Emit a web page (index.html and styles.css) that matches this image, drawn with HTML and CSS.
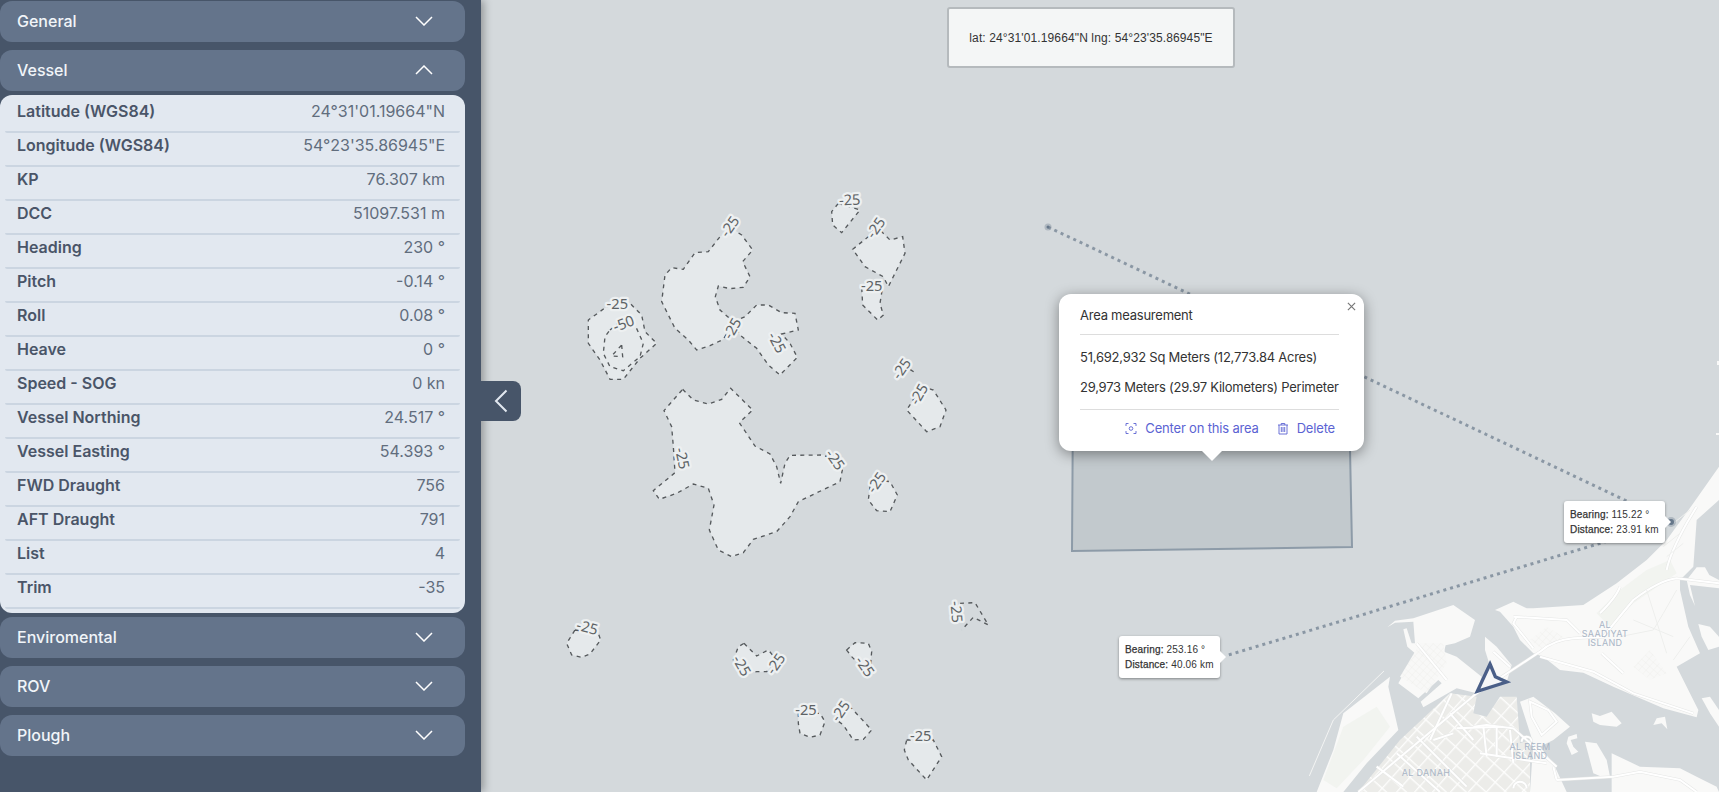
FILE: index.html
```html
<!DOCTYPE html>
<html lang="en">
<head>
    <meta charset="UTF-8">
    <meta name="viewport" content="width=device-width, initial-scale=1.0">
    <title>Vessel tracking</title>
    <link rel="stylesheet" href="styles.css">
</head>
<body>
    <div class="page">
        <aside class="sidebar">
            <div class="bar">
                <span>General</span>
                <svg class="chevron" viewBox="0 0 18 10"><path d="M1 1l8 8 8-8"/></svg>
            </div>
            <div class="bar">
                <span>Vessel</span>
                <svg class="chevron" viewBox="0 0 18 10"><path d="M1 9l8-8 8 8"/></svg>
            </div>
            <div class="panel">
                <div class="row"><span class="label">Latitude (WGS84)</span><span class="value">24°31'01.19664"N</span></div>
                <div class="row"><span class="label">Longitude (WGS84)</span><span class="value">54°23'35.86945"E</span></div>
                <div class="row"><span class="label">KP</span><span class="value">76.307 km</span></div>
                <div class="row"><span class="label">DCC</span><span class="value">51097.531 m</span></div>
                <div class="row"><span class="label">Heading</span><span class="value">230 °</span></div>
                <div class="row"><span class="label">Pitch</span><span class="value">-0.14 °</span></div>
                <div class="row"><span class="label">Roll</span><span class="value">0.08 °</span></div>
                <div class="row"><span class="label">Heave</span><span class="value">0 °</span></div>
                <div class="row"><span class="label">Speed - SOG</span><span class="value">0 kn</span></div>
                <div class="row"><span class="label">Vessel Northing</span><span class="value">24.517 °</span></div>
                <div class="row"><span class="label">Vessel Easting</span><span class="value">54.393 °</span></div>
                <div class="row"><span class="label">FWD Draught</span><span class="value">756</span></div>
                <div class="row"><span class="label">AFT Draught</span><span class="value">791</span></div>
                <div class="row"><span class="label">List</span><span class="value">4</span></div>
                <div class="row"><span class="label">Trim</span><span class="value">-35</span></div>
            </div>
            <div class="bar">
                <span>Enviromental</span>
                <svg class="chevron" viewBox="0 0 18 10"><path d="M1 1l8 8 8-8"/></svg>
            </div>
            <div class="bar">
                <span>ROV</span>
                <svg class="chevron" viewBox="0 0 18 10"><path d="M1 1l8 8 8-8"/></svg>
            </div>
            <div class="bar">
                <span>Plough</span>
                <svg class="chevron" viewBox="0 0 18 10"><path d="M1 1l8 8 8-8"/></svg>
            </div>
            <button class="collapse">
                <svg viewBox="0 0 14 24"><path d="M12.5 1.5L2 12l10.5 10.5"/></svg>
            </button>
        </aside>

        <main class="map">
            <svg class="chart" viewBox="481 0 1238 792">
                <defs>
                    <pattern id="blocks" width="40" height="40" patternUnits="userSpaceOnUse" patternTransform="rotate(42)">
                        <rect width="40" height="40" fill="#ecece9"/>
                        <path d="M0 0H40M0 0V40" stroke="#fdfdfc" stroke-width="8"/>
                    </pattern>
                    <pattern id="fine" width="16" height="16" patternUnits="userSpaceOnUse" patternTransform="rotate(42)">
                        <rect width="16" height="16" fill="#f8f8f7"/>
                        <path d="M0 0H16M0 0V16" stroke="#ecedeb" stroke-width="2"/>
                    </pattern>
                    <g id="roadset">
                        <path d="M175 936L530 640"/>
                        <path d="M530 640L720 515Q760 480 820 475L910 470Q950 420 1000 360Q1080 300 1130 295L1257 310"/>
                        <path d="M390 780L455 640M290 820L420 936M350 770L500 920M450 700L520 780"/>
                        <path d="M470 745L610 740M400 780L460 760M230 860L310 920M540 820L740 850"/>
                        <path d="M550 740L560 830M590 740L590 830M630 750L640 850M760 860L770 900"/>
                        <path d="M520 740L560 735L640 745L770 860"/>
                        <path d="M770 900L940 890L1020 875L1140 900L1190 936"/>
                        <path d="M650 410L640 430L700 505"/>
                        <path d="M640 410L800 420L840 460"/>
                        <path d="M720 530L880 575L1000 640L1180 700"/>
                        <path d="M350 490L440 600"/>
                        <path d="M1100 270Q1110 220 1160 130L1190 80"/>
                        <path d="M900 400Q950 350 960 320"/>
                        <path d="M905 520L970 580"/>
                        <path d="M690 665L745 690L770 725L725 765L695 710Z"/>
                        <path d="M665 785a15 15 0 1 1 30 0M640 925a20 20 0 1 1 40 0"/>
                        <path d="M580 515L630 560"/>
                    </g>
                </defs>

                <!-- land, drawn in 3x crop coordinates -->
                <g transform="translate(1300 480) scale(0.33333)">
                    <g class="land">
                        <path d="M1257 -40L1257 60L1190 120L1180 260L1140 300L1140 330L1165 440L1200 520L1130 560L1195 690L1190 712L1090 685L940 620L850 578L780 570L730 530L700 520L660 480L640 440L600 395L585 390L640 365L680 385L700 385L850 375L950 310L1040 240L1100 180L1180 70Z"/>
                        <path d="M1190 262L1215 262L1228 285L1257 300L1257 325L1170 315L1185 378L1170 345L1160 300Z"/>
                        <path d="M1195 432L1230 440L1257 470L1257 500L1225 510L1205 470Z"/>
                        <path d="M1205 655L1230 650L1257 690L1257 740L1230 700Z"/>
                        <path d="M262 442L285 422L340 415L460 375L525 420L510 470L465 490L437 496L432 515L470 530L545 590L530 640L470 625L370 682L362 665L425 610L415 600L355 655L295 610L345 520L322 500L310 448L320 445L335 490L345 490L340 425L285 428Z"/>
                        <path d="M555 470L590 500L635 555L622 600L580 590L555 510Z"/>
                        <path d="M50 936L100 810L130 700L270 590L265 620L295 750L200 850L130 936Z"/>
                        <path d="M875 700L900 708L935 695L965 730L950 740L900 735L880 725Z"/>
                        <path d="M1070 715L1095 710L1102 748L1085 730L1060 735Z"/>
                        <path d="M830 762L832 775L812 780L820 800L835 815L815 825L800 790L805 770Z"/>
                        <path d="M855 785L890 790L920 840L930 890L905 890L880 880Z"/>
                        <path d="M935 820L1020 860L1140 865L1190 890L1250 920L1257 936L935 936Z"/>
                    </g>
                    <path class="thin" d="M28 888L100 720L252 573"/>
                    <path class="city" d="M175 936L300 780L450 640L530 650L520 700L560 710L600 650L650 650L660 790L690 780L690 936Z"/>
                    <path class="land" d="M660 665L700 650L765 700L810 740L760 780L720 800L760 850L800 936L690 936L700 790Z"/>
                    <path class="fine" d="M300 590L360 490L430 490L440 550L380 640Z"/>
                    <path class="fine" d="M690 480L740 440L790 470L730 510Z"/>
                    <path class="fine" d="M1000 560L1050 510L1100 580L1050 600Z"/>
                    <path class="park" d="M70 900L130 740L230 680L270 740L190 840L110 925Z"/>
                    <path class="park" d="M890 400L960 330L1040 270L1110 240L1130 280L1000 370L930 440Z"/>

                    <use class="casing" href="#roadset"/>
                    <use class="roads" href="#roadset"/>
                    <path class="outline" d="M1130 330L1090 400L1060 450L960 470M1000 420L1120 470M1040 330L1100 520M1120 540L1170 470"/>
                    <path class="outline" d="M1090 200L1140 160M1100 230L1150 190M1120 130L1170 90"/>

                    <text class="place" text-anchor="middle" x="915" y="444">AL</text>
                    <text class="place" text-anchor="middle" x="915" y="470">SAADIYAT</text>
                    <text class="place" text-anchor="middle" x="915" y="497">ISLAND</text>
                    <text class="place" text-anchor="middle" x="690" y="809">AL REEM</text>
                    <text class="place" text-anchor="middle" x="690" y="836">ISLAND</text>
                    <text class="place" text-anchor="middle" x="378" y="888">AL DANAH</text>

                    <path class="vessel" d="M570 552L586 590L620 606L532 634Z"/>
                </g>
                <path class="land" d="M1717 361h2v4h-2zM1716 433h3v2h-3z"/>

                <!-- depth contours -->
                <g class="contours" transform="translate(560 180) scale(0.33333)">
                    <path d="M515 145L545 165L578 210L548 245L570 290L550 322L510 326L475 318L466 350L480 390L520 425L490 478L450 497L410 510L385 480L345 445L305 365L315 285L335 263L370 268L405 218L445 215L480 170Z"/>
                    <path d="M520 425L555 410L590 375L625 375L665 398L705 400L715 450L665 462L690 490L712 532L660 585L625 555L590 505L540 465Z"/>
                    <path d="M140 380L210 370L245 405L255 455L290 490L240 535L190 598L150 598L120 540L85 490L85 420Z"/>
                    <path class="hollow" d="M150 450L185 420L225 435L250 490L240 530L190 572L150 560L130 520L135 470Z"/>
                    <path class="hollow" d="M185 495L188 530L155 528Z"/>
                    <path d="M368 628L400 660L445 672L485 658L512 625L578 690L538 728L585 798L630 822L650 860L662 910L675 850L690 826L790 825L850 855L840 905L715 965L690 1010L650 1055L580 1078L550 1118L515 1130L475 1110L448 1050L462 975L445 925L400 912L350 940L298 958L280 932L345 878L340 800L335 740L312 692Z"/>
                    <path d="M835 70L900 90L845 158L818 135L815 95Z"/>
                    <path d="M945 135L990 180L1028 170L1035 220L985 320L970 290L915 260L878 208L925 170Z"/>
                    <path d="M905 320L968 320L960 370L970 405L953 420L908 375Z"/>
                    <path class="hollow" d="M1030 555L1065 578"/>
                    <path d="M1085 620L1120 630L1158 690L1140 740L1100 755L1040 690Z"/>
                    <path d="M950 900L990 905L1012 945L990 995L950 992L925 960L930 920Z"/>

                    <text transform="translate(522 148) rotate(-55)">-25</text>
                    <text transform="translate(172 387)">-25</text>
                    <text transform="translate(196 445) rotate(-20)">-50</text>
                    <text transform="translate(530 453) rotate(-60)">-25</text>
                    <text transform="translate(637 495) rotate(62)">-25</text>
                    <text transform="translate(870 75) rotate(-3)">-25</text>
                    <text transform="translate(960 152) rotate(-55)">-25</text>
                    <text transform="translate(935 334)">-25</text>
                    <text transform="translate(1037 575) rotate(-55)">-25</text>
                    <text transform="translate(1090 650) rotate(-60)">-25</text>
                    <text transform="translate(813 848) rotate(55)">-25</text>
                    <text transform="translate(352 838) rotate(78)">-25</text>
                    <text transform="translate(962 916) rotate(-55)">-25</text>
                </g>
                <g class="contours" transform="translate(550 580) scale(0.33333)">
                    <path d="M75 150L145 160L152 180L120 222L95 232L65 225L50 190Z"/>
                    <path d="M582 190L620 228L655 210L680 240L650 275L620 275L575 280L550 240L565 200Z"/>
                    <path d="M890 210L915 188L955 190L965 215L962 250L940 265L905 230Z"/>
                    <path d="M745 400L810 400L825 425L810 465L780 472L750 460L745 430Z"/>
                    <path d="M870 385L905 385L965 450L940 478L910 480L880 435L860 420Z"/>
                    <path d="M1070 480L1150 480L1175 530L1130 600L1075 540L1063 510Z"/>
                    <path class="hollow" d="M1230 70L1275 68L1315 135L1290 122L1270 112L1235 150"/>

                    <text transform="translate(108 157) rotate(15)">-25</text>
                    <text transform="translate(562 265) rotate(60)">-25</text>
                    <text transform="translate(690 260) rotate(-55)">-25</text>
                    <text transform="translate(932 268) rotate(55)">-25</text>
                    <text transform="translate(768 405)">-25</text>
                    <text transform="translate(884 402) rotate(-55)">-25</text>
                    <text transform="translate(1112 482)">-25</text>
                    <text transform="translate(1204 97) rotate(85)">-25</text>
                </g>

                <!-- measured area and range lines -->
                <path class="area" d="M1073 400L1349 400L1352 547L1072 551Z"/>
                <path class="range" d="M1048 227L1671 522L1225 656"/>
                <circle class="halo" cx="1048" cy="227" r="3.5"/>
                <circle class="node" cx="1048" cy="227" r="1.5"/>
                <circle class="halo" cx="1671" cy="522" r="5"/>
                <circle class="node" cx="1671" cy="522" r="3"/>
            </svg>

            <div class="coords">lat: 24°31'01.19664"N lng: 54°23'35.86945"E</div>

            <div class="popup">
                <button class="popup-close">
                    <svg viewBox="0 0 10 10"><path d="M1 1l8 8M9 1L1 9"/></svg>
                </button>
                <div class="popup-title">Area measurement</div>
                <div class="popup-body">
                    <p>51,692,932 Sq Meters (12,773.84 Acres)</p>
                    <p>29,973 Meters (29.97 Kilometers) Perimeter</p>
                </div>
                <div class="popup-actions">
                    <a class="action">
                        <svg viewBox="0 0 12 12"><path d="M1 3.500V1h2.500M8.500 1H11v2.500M11 8.500V11H8.500M3.500 11H1V8.500"/><circle cx="6" cy="6" r="1.800"/></svg>
                        Center on this area
                    </a>
                    <a class="action">
                        <svg viewBox="0 0 12 12"><path d="M1 2.500h10M4.200 2.500V1h3.600v1.500M2 2.500v9h8v-9M4.300 4.500v5M6 4.500v5M7.700 4.500v5"/></svg>
                        Delete
                    </a>
                </div>
            </div>

            <div class="tooltip tooltip-east">
                <div><b>Bearing:</b> 115.22 °</div>
                <div><b>Distance:</b> 23.91 km</div>
            </div>
            <div class="tooltip tooltip-west">
                <div><b>Bearing:</b> 253.16 °</div>
                <div><b>Distance:</b> 40.06 km</div>
            </div>
        </main>
    </div>
</body>
</html>
```

FILE: styles.css
```css
html, body {
    margin: 0;
    height: 100%;
    overflow: hidden;
}
.page {
    display: flex;
    height: 792px;
    font-family: Inter, "Noto Sans", sans-serif;
}
.sidebar {
    position: relative;
    z-index: 2;
    flex: 0 0 481px;
    box-sizing: border-box;
    padding: 1px 16px 0 0;
    background-color: #475569;
    box-shadow: 3px 0 8px rgba(0, 0, 0, 0.3);
}
.bar {
    display: flex;
    justify-content: space-between;
    align-items: center;
    box-sizing: border-box;
    height: 41px;
    margin-bottom: 8px;
    padding: 0 32px 2px 17px;
    border-radius: 12px;
    background-color: #64748b;
    color: #f1f5f9;
    font-size: 16px;
    font-weight: 500;
}
.chevron {
    width: 18px;
    height: 10px;
    fill: none;
    stroke: #fff;
    stroke-width: 1.5;
}
.panel {
    box-sizing: border-box;
    height: 518px;
    margin: -4px 0 4px;
    padding: 4px 5px;
    border-radius: 12px;
    background-color: #e2e8f0;
}
.row {
    display: flex;
    justify-content: space-between;
    box-sizing: border-box;
    height: 34px;
    padding: 1px 15px 0 12px;
    border-bottom: 2px solid #cbd5e1;
    border-radius: 2px;
    font-size: 16px;
    line-height: 22px;
}
.label {
    color: #4a5568;
    font-weight: 600;
}
.value {
    color: #616d7d;
}
.collapse {
    position: absolute;
    top: 381px;
    left: 100%;
    width: 40px;
    height: 40px;
    padding: 0;
    border: 0;
    border-radius: 0 8px 8px 0;
    background-color: #475569;
}
.collapse svg {
    display: block;
    width: 14px;
    height: 24px;
    margin-left: 13px;
    fill: none;
    stroke: #e2e8f0;
    stroke-width: 2;
}
.map {
    position: relative;
    flex: 1;
    background-color: #d4d9dc;
    overflow: hidden;
}
.chart {
    display: block;
    width: 1238px;
    height: 792px;
}
.land {
    fill: #f9f9f8;
}
.thin {
    fill: none;
    stroke: #f3f4f3;
    stroke-width: 3;
}
.city {
    fill: url(#blocks);
}
.fine {
    fill: url(#fine);
}
.park {
    fill: #f2f4f0;
}
.casing {
    fill: none;
    stroke: #e6e7e6;
    stroke-width: 9;
}
.roads {
    fill: none;
    stroke: #fff;
    stroke-width: 6;
}
.outline {
    fill: none;
    stroke: #eeefed;
    stroke-width: 3;
}
.place {
    fill: #a9b5c6;
    font-family: Inter, sans-serif;
    font-size: 27px;
    letter-spacing: 1px;
}
.vessel {
    fill: #f6f7f8;
    stroke: #4a5f88;
    stroke-width: 10;
    stroke-linejoin: miter;
}
.contours path {
    fill: #e5e9eb;
    stroke: #55595c;
    stroke-width: 4;
    stroke-dasharray: 12 13;
}
.contours path.hollow {
    fill: none;
}
.contours text {
    fill: #5e6366;
    font-family: "Noto Sans", sans-serif;
    font-size: 44px;
    text-anchor: middle;
    paint-order: stroke;
    stroke: #edf0f1;
    stroke-width: 14px;
    stroke-linejoin: round;
}
.area {
    fill: #c2c9cd;
    stroke: #8d9ba8;
    stroke-width: 2;
}
.range {
    fill: none;
    stroke: #8a97a4;
    stroke-width: 3;
    stroke-dasharray: 3 4;
}
.halo {
    fill: rgba(120, 135, 150, 0.4);
}
.node {
    fill: #66778a;
}
.coords {
    position: absolute;
    top: 7px;
    left: 466px;
    display: flex;
    align-items: center;
    justify-content: center;
    box-sizing: border-box;
    width: 288px;
    height: 61px;
    border: 2px solid #b5babd;
    border-radius: 3px;
    background-color: #f4f6f6;
    color: #333;
    font-family: "Liberation Sans", Arial, sans-serif;
    font-size: 12px;
    letter-spacing: 0.12px;
}
.popup {
    position: absolute;
    top: 294px;
    left: 578px;
    box-sizing: border-box;
    width: 305px;
    height: 157px;
    padding: 0 25px 0 21px;
    border-radius: 12px;
    background-color: #fff;
    box-shadow: 0 3px 14px rgba(0, 0, 0, 0.4);
    color: #333;
    font-size: 13px;
    letter-spacing: -0.24px;
    white-space: nowrap;
}
.popup::after {
    content: "";
    position: absolute;
    bottom: -10px;
    left: 143px;
    border-top: 10px solid #fff;
    border-left: 10px solid transparent;
    border-right: 10px solid transparent;
}
.popup-close {
    position: absolute;
    top: 8px;
    right: 8px;
    width: 9px;
    height: 9px;
    padding: 0;
    border: 0;
    background: none;
}
.popup-close svg {
    display: block;
    fill: none;
    stroke: #777;
    stroke-width: 1.3;
}
.popup-title {
    height: 41px;
    box-sizing: border-box;
    padding-top: 13px;
    border-bottom: 1px solid #ddd;
    line-height: 16px;
}
.popup-body {
    height: 74px;
    border-bottom: 1px solid #ddd;
}
.popup-body p {
    margin: 0;
    padding-top: 14px;
    line-height: 16px;
}
.popup-actions {
    display: flex;
    justify-content: flex-end;
    gap: 18px;
    padding: 10px 4px 0 0;
    line-height: 16px;
}
.action {
    display: flex;
    align-items: center;
    gap: 8px;
    color: #5b63d3;
    letter-spacing: -0.18px;
}
.action svg {
    width: 12px;
    height: 13px;
    fill: none;
    stroke: #5b63d3;
    stroke-width: 0.9;
}
.tooltip {
    position: absolute;
    box-sizing: border-box;
    width: 101px;
    height: 42px;
    padding: 6px;
    border-radius: 3px;
    background-color: #fff;
    box-shadow: 0 1px 3px rgba(0, 0, 0, 0.4);
    color: #333;
    font-family: "Liberation Sans", Arial, sans-serif;
    font-size: 10px;
    letter-spacing: 0.17px;
    line-height: 15px;
    white-space: nowrap;
}
.tooltip b {
    font-weight: 400;
    -webkit-text-stroke: 0.25px #333;
}
.tooltip::after {
    content: "";
    position: absolute;
    top: 15px;
    right: -6px;
    border-left: 6px solid #fff;
    border-top: 6px solid transparent;
    border-bottom: 6px solid transparent;
}
.tooltip-east {
    top: 501px;
    left: 1083px;
}
.tooltip-west {
    top: 636px;
    left: 638px;
}
```
